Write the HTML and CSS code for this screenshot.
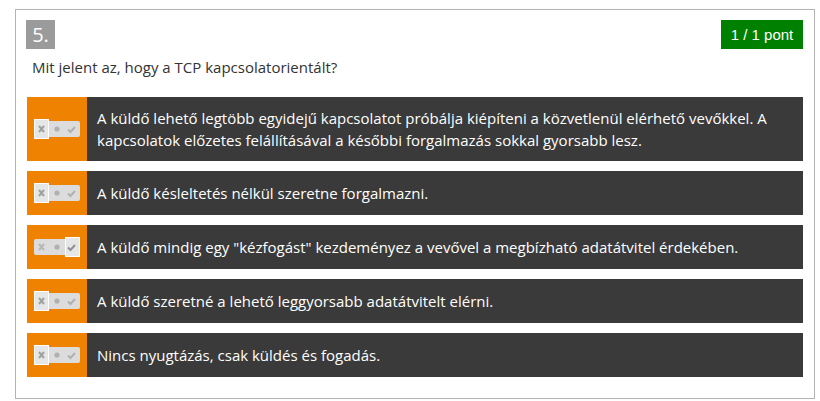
FILE: index.html
```html
<!DOCTYPE html>
<html lang="hu">
<head>
<meta charset="utf-8">
<link rel="stylesheet" href="styles.css">
</head>
<body>
<div class="card">
  <div class="head">
    <span class="num">5.</span>
    <span class="score">1 / 1 pont</span>
  </div>
  <p class="question">Mit jelent az, hogy a TCP kapcsolatorientált?</p>
  <ul class="answers">
    <li class="answer">
      <div class="mark"><svg class="toggle" viewBox="0 0 46 20" width="46" height="20"><rect x="0" y="2" width="46" height="16" rx="2" fill="#dcdcdc"/><rect x="0.5" y="0.5" width="14" height="19" fill="#e6e6e6" stroke="#fff"/><path d="M5 7l5 6M10 7l-5 6" stroke="#a0a0a0" stroke-width="2"/><circle cx="23" cy="10" r="2.6" fill="#b0b0b0"/><path d="M34 10.5l2.5 2.5 4.5-5" stroke="#b0b0b0" stroke-width="2" fill="none"/></svg></div>
      <div class="text"><span>A küldő lehető legtöbb egyidejű kapcsolatot próbálja kiépíteni a közvetlenül elérhető vevőkkel. A kapcsolatok előzetes felállításával a későbbi forgalmazás sokkal gyorsabb lesz.</span></div>
    </li>
    <li class="answer">
      <div class="mark"><svg class="toggle" viewBox="0 0 46 20" width="46" height="20"><rect x="0" y="2" width="46" height="16" rx="2" fill="#dcdcdc"/><rect x="0.5" y="0.5" width="14" height="19" fill="#e6e6e6" stroke="#fff"/><path d="M5 7l5 6M10 7l-5 6" stroke="#a0a0a0" stroke-width="2"/><circle cx="23" cy="10" r="2.6" fill="#b0b0b0"/><path d="M34 10.5l2.5 2.5 4.5-5" stroke="#b0b0b0" stroke-width="2" fill="none"/></svg></div>
      <div class="text"><span>A küldő késleltetés nélkül szeretne forgalmazni.</span></div>
    </li>
    <li class="answer">
      <div class="mark"><svg class="toggle" viewBox="0 0 46 20" width="46" height="20"><rect x="0" y="2" width="46" height="16" rx="2" fill="#dcdcdc"/><rect x="31.5" y="0.5" width="14" height="19" fill="#e6e6e6" stroke="#fff"/><path d="M5 7l5 6M10 7l-5 6" stroke="#b8b8b8" stroke-width="2"/><circle cx="23" cy="10" r="2.6" fill="#b0b0b0"/><path d="M34 10.5l2.5 2.5 4.5-5" stroke="#909090" stroke-width="2" fill="none"/></svg></div>
      <div class="text"><span>A küldő mindig egy "kézfogást" kezdeményez a vevővel a megbízható adatátvitel érdekében.</span></div>
    </li>
    <li class="answer">
      <div class="mark"><svg class="toggle" viewBox="0 0 46 20" width="46" height="20"><rect x="0" y="2" width="46" height="16" rx="2" fill="#dcdcdc"/><rect x="0.5" y="0.5" width="14" height="19" fill="#e6e6e6" stroke="#fff"/><path d="M5 7l5 6M10 7l-5 6" stroke="#a0a0a0" stroke-width="2"/><circle cx="23" cy="10" r="2.6" fill="#b0b0b0"/><path d="M34 10.5l2.5 2.5 4.5-5" stroke="#b0b0b0" stroke-width="2" fill="none"/></svg></div>
      <div class="text"><span>A küldő szeretné a lehető leggyorsabb adatátvitelt elérni.</span></div>
    </li>
    <li class="answer">
      <div class="mark"><svg class="toggle" viewBox="0 0 46 20" width="46" height="20"><rect x="0" y="2" width="46" height="16" rx="2" fill="#dcdcdc"/><rect x="0.5" y="0.5" width="14" height="19" fill="#e6e6e6" stroke="#fff"/><path d="M5 7l5 6M10 7l-5 6" stroke="#a0a0a0" stroke-width="2"/><circle cx="23" cy="10" r="2.6" fill="#b0b0b0"/><path d="M34 10.5l2.5 2.5 4.5-5" stroke="#b0b0b0" stroke-width="2" fill="none"/></svg></div>
      <div class="text"><span>Nincs nyugtázás, csak küldés és fogadás.</span></div>
    </li>
  </ul>
</div>
</body>
</html>
```

FILE: styles.css
```css
html, body {
  margin: 0;
  padding: 0;
  background: #fff;
}
body {
  padding: 9px 5px 2px 15px;
  font-family: "Open Sans", "Noto Sans", sans-serif;
  color: #333;
}
.card {
  width: 776px;
  height: 368px;
  border: 1px solid #b4b4b4;
  padding: 10px 11px 10px 11px;
}
.head {
  display: flex;
  justify-content: space-between;
  align-items: flex-start;
}
.num {
  display: flex;
  align-items: center;
  justify-content: center;
  width: 29px;
  height: 29px;
  margin-left: -1px;
  background: #9b9b9b;
  color: #fff;
  font-size: 20px;
  line-height: 29px;
}
.score {
  display: flex;
  align-items: center;
  justify-content: center;
  width: 82px;
  height: 29px;
  background: #008000;
  color: #fff;
  font-family: "Liberation Sans", Arial, sans-serif;
  font-size: 15px;
}
.question {
  margin: 8px 0 0 5px;
  font-size: 15px;
  line-height: 20px;
  color: #333;
}
.answers {
  list-style: none;
  margin: 20px 0 0 0;
  padding: 0;
  display: flex;
  flex-direction: column;
  gap: 10px;
}
.answer {
  display: flex;
  background: #3a3a3a;
  min-height: 44px;
}
.mark {
  flex: 0 0 60px;
  background: #ef8200;
  display: flex;
  align-items: center;
  justify-content: center;
}
.toggle {
  display: block;
}
.text {
  flex: 1;
  display: flex;
  align-items: center;
  padding: 10px 20px 10px 10px;
  color: #fff;
  font-size: 15px;
  line-height: 22px;
}
```
